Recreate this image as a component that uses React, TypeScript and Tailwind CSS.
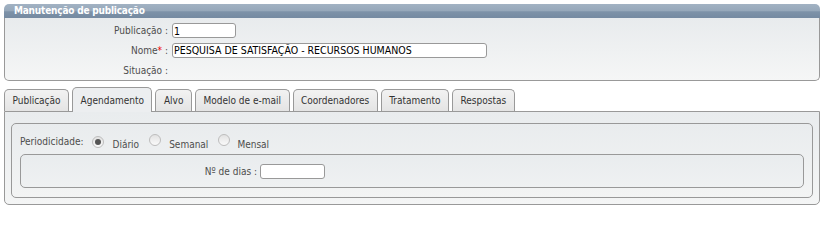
import React from "react";

function Radio({ checked }: { checked?: boolean }) {
  return (
    <span className="inline-flex h-[12px] w-[12px] items-center justify-center rounded-full border border-[#bdbdbd] bg-[linear-gradient(#e2e2e2,#fafafa)]">
      {checked ? <span className="h-[6px] w-[6px] rounded-full bg-[#555]" /> : null}
    </span>
  );
}

const tabs = [
  "Publicação",
  "Agendamento",
  "Alvo",
  "Modelo de e-mail",
  "Coordenadores",
  "Tratamento",
  "Respostas",
];

export default function App() {
  return (
    <div className="h-[209px] w-[824px] bg-white px-[4px] pt-[4px] font-['DejaVu_Sans_Condensed','DejaVu_Sans',sans-serif] text-[10px] text-[#4d4d4d]">
      {/* Top panel */}
      <div className="w-[816px]">
        <div className="flex h-[14px] items-center rounded-t-[5px] bg-[linear-gradient(#a2b2c3,#96a8ba_50%,#7d92a8_55%,#758aa1)] pl-[10px]">
          <span className="text-[10px] font-bold leading-none tracking-[-0.2px] text-white">Manutenção de publicação</span>
        </div>
        <div className="flex h-[63px] flex-col rounded-b-[5px] border-x border-b border-[#999] bg-[linear-gradient(#e8ebed,#f5f6f6)] pt-[3px]">
          <div className="flex h-[20px] items-center">
            <div className="w-[163px] text-right">Publicação :</div>
            <input
              readOnly
              value="1"
              className="ml-[4px] h-[15px] w-[64px] rounded-[3px] border border-[#999] bg-white px-[1px] text-[10.5px] leading-none text-black outline-none"
            />
          </div>
          <div className="flex h-[20px] items-center">
            <div className="w-[163px] text-right">
              Nome<span className="text-[#e00]">*</span> :
            </div>
            <input
              readOnly
              value="PESQUISA DE SATISFAÇÃO - RECURSOS HUMANOS"
              className="ml-[4px] h-[15px] w-[315px] rounded-[3px] border border-[#999] bg-white px-[1px] text-[10.5px] leading-none text-black outline-none"
            />
          </div>
          <div className="flex h-[20px] items-center pt-[1px]">
            <div className="w-[163px] text-right">Situação :</div>
          </div>
        </div>
      </div>

      {/* Tabs */}
      <div className="mt-[6px] flex h-[24px] w-[816px] items-end gap-[3px]">
        {tabs.map((t) => {
          const active = t === "Agendamento";
          return (
            <div
              key={t}
              className={
                active
                  ? "relative z-10 -mb-[1px] flex h-[25px] items-center rounded-t-[5px] border-x border-t border-[#999] bg-[#eceef0] px-[7.5px] text-[#333]"
                  : "flex h-[22px] items-center rounded-t-[5px] border-x border-t border-[#999] bg-[linear-gradient(#f2f2f2,#e4e4e4)] px-[7.5px] text-[#333]"
              }
            >
              {t}
            </div>
          );
        })}
      </div>

      {/* Tab panel */}
      <div className="h-[94px] w-[816px] rounded-b-[5px] border border-[#999] bg-[linear-gradient(#e9ecee,#f4f5f5)] px-[6px] pt-[11px]">
        <div className="flex h-[75px] flex-col rounded-[5px] border border-[#999] bg-[linear-gradient(#e9ecee,#f3f4f4)] px-[8px]">
          <div className="flex h-[30px] items-center pt-[5px]">
            <span>Periodicidade:</span>
            <span className="ml-[9px]"><Radio checked /></span>
            <span className="ml-[8px] mt-[5px]">Diário</span>
            <span className="ml-[10px]"><Radio /></span>
            <span className="ml-[8px] mt-[5px]">Semanal</span>
            <span className="ml-[10px]"><Radio /></span>
            <span className="ml-[7px] mt-[5px]">Mensal</span>
          </div>
          <div className="flex h-[34px] items-center rounded-[5px] border border-[#999] bg-[linear-gradient(#e9ecee,#eff1f2)]">
            <div className="w-[236px] text-right">Nº de dias :</div>
            <input
              readOnly
              value=""
              className="ml-[3px] h-[15px] w-[65px] rounded-[3px] border border-[#999] bg-white px-[1px] text-[11px] leading-none text-black outline-none"
            />
          </div>
        </div>
      </div>
    </div>
  );
}
